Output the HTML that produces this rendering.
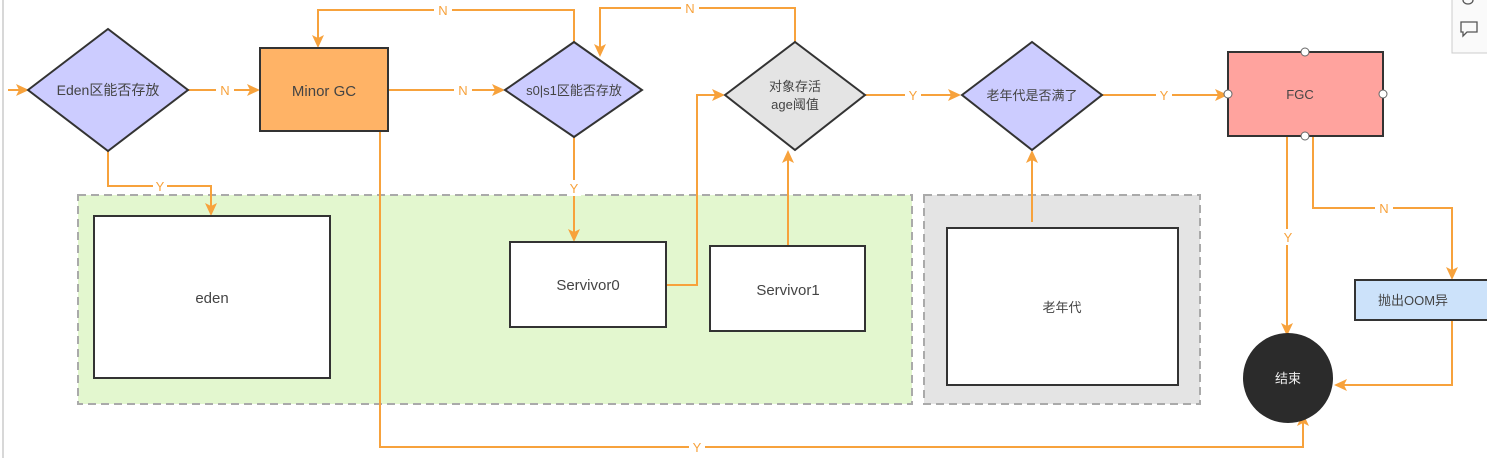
<!DOCTYPE html>
<html><head><meta charset="utf-8"><style>
html,body{margin:0;padding:0;background:#fff;width:1487px;height:458px;overflow:hidden}
text{font-family:"Liberation Sans","Noto Sans CJK SC",sans-serif;fill:#444}
</style></head><body>
<svg width="1487" height="458" viewBox="0 0 1487 458" xmlns="http://www.w3.org/2000/svg">
<defs><marker id="a" markerWidth="13" markerHeight="12" refX="11" refY="6" orient="auto" markerUnits="userSpaceOnUse"><path d="M0,0 L13,6 L0,12 L3,6 Z" fill="#f7a23c"/></marker></defs>
<line x1="3" y1="0" x2="3" y2="458" stroke="#ccc" stroke-width="1.5"/>
<rect x="78" y="195" width="834" height="209" fill="#e3f7cf" stroke="#aaa" stroke-width="2" stroke-dasharray="8,5"/>
<rect x="924" y="195" width="276" height="209" fill="#e4e4e4" stroke="#aaa" stroke-width="2" stroke-dasharray="8,5"/>
<g fill="none" stroke="#f7a23c" stroke-width="2">
<line x1="8" y1="90" x2="27" y2="90" marker-end="url(#a)"/>
<line x1="188" y1="90" x2="258" y2="90" marker-end="url(#a)"/>
<line x1="388" y1="90" x2="503" y2="90" marker-end="url(#a)"/>
<polyline points="574,42 574,10 318,10 318,46" marker-end="url(#a)"/>
<polyline points="795,42 795,8 600,8 600,55" marker-end="url(#a)"/>
<line x1="865" y1="95" x2="959" y2="95" marker-end="url(#a)"/>
<line x1="1102" y1="95" x2="1226" y2="95" marker-end="url(#a)"/>
<line x1="574" y1="137" x2="574" y2="240" marker-end="url(#a)"/>
<polyline points="108,151 108,186 211,186 211,214" marker-end="url(#a)"/>
<polyline points="666,285 697,285 697,95 723,95" marker-end="url(#a)"/>
<line x1="788" y1="246" x2="788" y2="152" marker-end="url(#a)"/>
<line x1="1032" y1="222" x2="1032" y2="152" marker-end="url(#a)"/>
<polyline points="380,131 380,447 1303,447 1303,415" marker-end="url(#a)"/>
<line x1="1287" y1="136" x2="1287" y2="334" marker-end="url(#a)"/>
<polyline points="1313,136 1313,208 1452,208 1452,278" marker-end="url(#a)"/>
<polyline points="1452,320 1452,385 1336,385" marker-end="url(#a)"/>
</g>
<g font-size="13" text-anchor="middle">
<rect x="216" y="82" width="18" height="16" fill="#fff"/><text x="225" y="95" style="fill:#f7a23c">N</text>
<rect x="454" y="82" width="18" height="16" fill="#fff"/><text x="463" y="95" style="fill:#f7a23c">N</text>
<rect x="434" y="3" width="18" height="16" fill="#fff"/><text x="443" y="15" style="fill:#f7a23c">N</text>
<rect x="681" y="1" width="18" height="16" fill="#fff"/><text x="690" y="13" style="fill:#f7a23c">N</text>
<rect x="905" y="87" width="16" height="16" fill="#fff"/><text x="913" y="100" style="fill:#f7a23c">Y</text>
<rect x="1156" y="87" width="16" height="16" fill="#fff"/><text x="1164" y="100" style="fill:#f7a23c">Y</text>
<rect x="567" y="180" width="14" height="16" fill="#fff"/><text x="574" y="193" style="fill:#f7a23c">Y</text>
<rect x="153" y="178" width="14" height="16" fill="#fff"/><text x="160" y="191" style="fill:#f7a23c">Y</text>
<rect x="689" y="439" width="16" height="16" fill="#fff"/><text x="697" y="452" style="fill:#f7a23c">Y</text>
<rect x="1280" y="229" width="14" height="16" fill="#fff"/><text x="1288" y="242" style="fill:#f7a23c">Y</text>
<rect x="1375" y="200" width="18" height="16" fill="#fff"/><text x="1384" y="213" style="fill:#f7a23c">N</text>
</g>
<polygon points="28,90 108,29 188,90 108,151" fill="#ccccff" stroke="#333" stroke-width="2"/>
<text x="108" y="95" font-size="14" text-anchor="middle">Eden区能否存放</text>
<rect x="260" y="48" width="128" height="83" fill="#ffb366" stroke="#333" stroke-width="2"/>
<text x="324" y="96" font-size="15" text-anchor="middle">Minor GC</text>
<polygon points="505,90 574,42 642,90 574,137" fill="#ccccff" stroke="#333" stroke-width="2"/>
<text x="574" y="95" font-size="13" text-anchor="middle">s0|s1区能否存放</text>
<polygon points="725,95 795,42 865,95 795,150" fill="#e4e4e4" stroke="#333" stroke-width="2"/>
<text x="795" y="91" font-size="13" text-anchor="middle">对象存活</text>
<text x="795" y="109" font-size="13" text-anchor="middle">age阈值</text>
<polygon points="962,95 1032,42 1102,95 1032,150" fill="#ccccff" stroke="#333" stroke-width="2"/>
<text x="1032" y="100" font-size="13" text-anchor="middle">老年代是否满了</text>
<rect x="1228" y="52" width="155" height="84" fill="#ffa39e" stroke="#333" stroke-width="2"/>
<text x="1300" y="99" font-size="13" text-anchor="middle">FGC</text>
<g fill="#fff" stroke="#666"><circle cx="1305" cy="52" r="4"/><circle cx="1305" cy="136" r="4"/><circle cx="1228" cy="94" r="4"/><circle cx="1383" cy="94" r="4"/></g>
<rect x="94" y="216" width="236" height="162" fill="#fff" stroke="#333" stroke-width="2"/>
<text x="212" y="303" font-size="15" text-anchor="middle">eden</text>
<rect x="510" y="242" width="156" height="85" fill="#fff" stroke="#333" stroke-width="2"/>
<text x="588" y="290" font-size="15" text-anchor="middle">Servivor0</text>
<rect x="710" y="246" width="155" height="85" fill="#fff" stroke="#333" stroke-width="2"/>
<text x="788" y="295" font-size="15" text-anchor="middle">Servivor1</text>
<rect x="947" y="228" width="231" height="157" fill="#fff" stroke="#333" stroke-width="2"/>
<text x="1062" y="312" font-size="13" text-anchor="middle">老年代</text>
<rect x="1355" y="280" width="140" height="40" fill="#cce2fa" stroke="#333" stroke-width="2"/>
<text x="1378" y="305" font-size="13">抛出OOM异</text>
<circle cx="1288" cy="378" r="45" fill="#2b2b2b"/>
<text x="1288" y="383" font-size="13" text-anchor="middle" style="fill:#eee">结束</text>
<rect x="1452" y="-2" width="40" height="55" fill="#fafafa" stroke="#ccc"/>
<path d="M1461,22 h16 v10 h-10 l-4,4 v-4 h-2 z" fill="none" stroke="#555" stroke-width="1.3"/>
<path d="M1463,0 a5,4 0 0 0 10,0" fill="none" stroke="#555" stroke-width="1.3"/>
</svg>
</body></html>
